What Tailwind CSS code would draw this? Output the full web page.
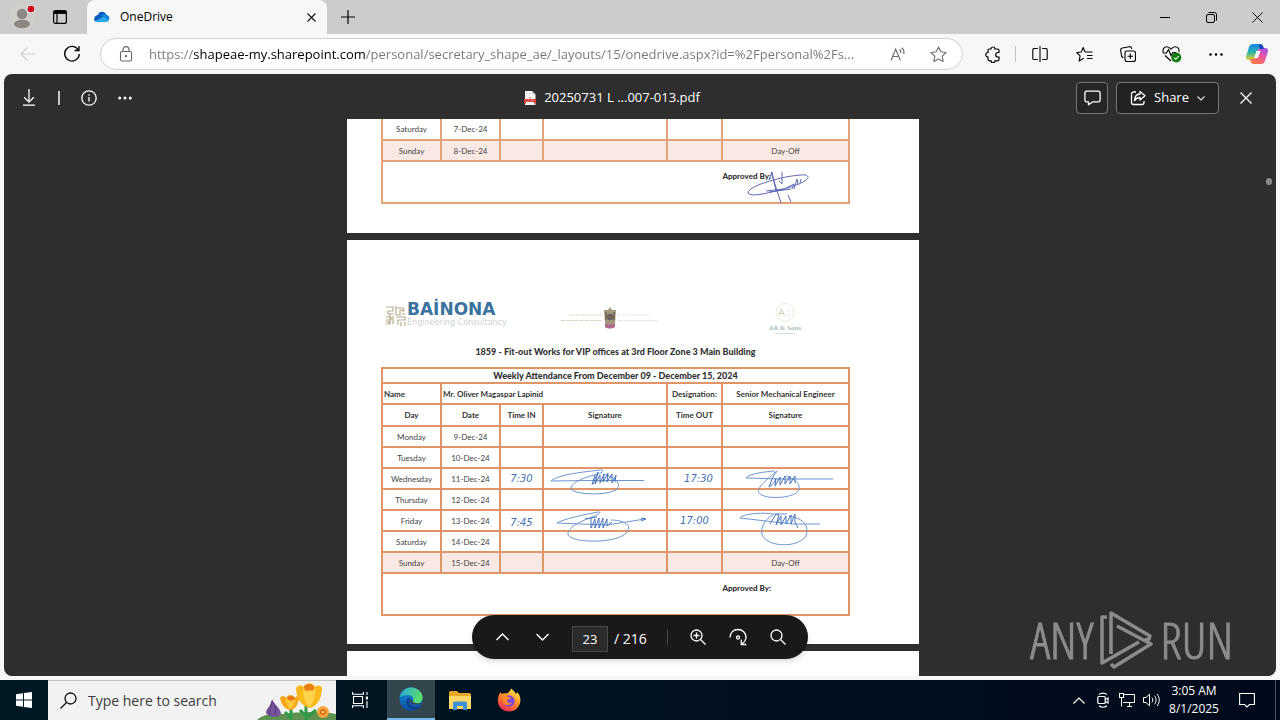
<!DOCTYPE html>
<html lang="en">
<head>
<meta charset="utf-8">
<meta name="viewport" content="width=device-width, initial-scale=1">
<title>OneDrive</title>
<script src="https://cdn.jsdelivr.net/npm/@tailwindcss/browser@4"></script>
</head>
<body class="flex h-screen flex-col overflow-hidden bg-[#f7f7f7] font-['Open_Sans','Noto_Sans',sans-serif] text-black">

<!-- Tab strip -->
<header class="flex h-[34px] shrink-0 bg-[#cccccc]">
  <div class="flex w-[87px] items-center rounded-br-lg">
    <button aria-label="Profile" class="flex h-full w-11 items-center justify-center">
      <svg class="h-7 w-7" viewBox="0 0 28 28"><circle cx="14" cy="14" r="13" fill="#d0cecb"/><circle cx="14" cy="11" r="5.2" fill="#8d8782"/><ellipse cx="14" cy="21" rx="8" ry="4.2" fill="#8d8782"/><circle cx="23" cy="6" r="4.6" fill="#ddd"/><circle cx="23" cy="6" r="3.3" fill="#d0021b"/></svg>
    </button>
    <button aria-label="Tab actions" class="flex h-full w-8 items-center justify-center">
      <svg class="h-4 w-4" viewBox="0 0 16 16" fill="none" stroke="#000" stroke-width="1.2"><rect x="1.6" y="1.6" width="12.8" height="12.8" rx="2"/><path d="M1.6 3.4h12.8" stroke-width="3"/><path d="M5 4v10"/></svg>
    </button>
  </div>
  <div class="flex w-60 items-center rounded-t-lg bg-[#f7f7f7] pr-2 pl-[7px]">
    <svg class="h-4 w-4" viewBox="0 0 16 16"><path d="M4.2 4.8A4.6 4.6 0 0 1 12.4 6L8 9 1 12.5A3.4 3.4 0 0 1 .2 9.800C.4 7.500 2.200 6 4.200 6z" fill="#0a5ec0"/><path d="M7 6.200 14.500 11.500A3.400 3.400 0 0 0 12.400 5.800 4.500 4.500 0 0 0 7 6.200z" fill="#1481dd"/><path d="M1.200 12.400 7.800 8.700c1-.6 2-.6 3 0l4 2.700A2.800 2.800 0 0 1 12.600 13H3.500a3.500 3.500 0 0 1-2.300-.6z" fill="#28a8ea"/></svg>
    <span class="ml-2.5 flex-1 text-xs">OneDrive</span>
    <button aria-label="Close tab" class="flex h-4 w-4 items-center justify-center">
      <svg class="h-[9px] w-[9px]" viewBox="0 0 9 9" stroke="#111" stroke-width="1.1"><path d="M.5.5l8 8M8.500.5l-8 8"/></svg>
    </button>
  </div>
  <button aria-label="New tab" class="flex w-[42px] items-center justify-center">
    <svg class="h-[14px] w-[14px]" viewBox="0 0 14 14" stroke="#000" stroke-width="1.2"><path d="M7 0v14M0 7h14"/></svg>
  </button>
  <div class="ml-auto flex">
    <button aria-label="Minimize" class="flex w-[46px] items-center justify-center"><svg class="h-[10px] w-[10px]" viewBox="0 0 10 10" stroke="#000"><path d="M0 5.500h10"/></svg></button>
    <button aria-label="Restore" class="flex w-[46px] items-center justify-center"><svg class="h-[11px] w-[11px]" viewBox="0 0 11 11" fill="none" stroke="#000"><rect x=".5" y="2.500" width="8" height="8" rx="1.500"/><path d="M2.500.5h6a2 2 0 0 1 2 2v6"/></svg></button>
    <button aria-label="Close" class="flex w-[46px] items-center justify-center"><svg class="h-[11px] w-[11px]" viewBox="0 0 11 11" stroke="#000"><path d="M.5.5l10 10M10.500.5l-10 10"/></svg></button>
  </div>
</header>

<!-- Address bar and browser tools -->
<nav class="flex h-10 shrink-0 items-center pr-1">
  <button aria-label="Back" class="flex h-10 w-14 items-center justify-center"><svg class="h-4 w-4" viewBox="0 0 16 16" fill="none" stroke="#cfcfcf" stroke-width="1.200"><path d="M15.500 8H1M7.500 1.500 1 8l6.500 6.500"/></svg></button>
  <button aria-label="Refresh" class="flex h-10 w-8 items-center justify-center"><svg class="h-[18px] w-[18px]" viewBox="0 0 18 18" fill="none" stroke="#000" stroke-width="1.300"><path d="M15.300 5A7.300 7.300 0 1 0 16.300 9M16 1v4.500h-4.500"/></svg></button>
  <div class="ml-3 flex h-8 min-w-0 flex-1 items-center rounded-full border border-[#d2d2d2] bg-white pr-1">
    <svg class="mr-[15px] ml-[17px] h-4 w-4 shrink-0" viewBox="0 0 16 16" fill="none" stroke="#666" stroke-width="1.100"><rect x="2.500" y="5.500" width="11" height="9.500" rx="1.500"/><path d="M5 5.500V3.600a3 3 0 0 1 6 0v1.900"/><circle cx="8" cy="10.200" r=".6" fill="#555"/></svg>
    <input aria-label="Address" type="text" value="https://shapeae-my.sharepoint.com/personal/secretary_shape_ae/_layouts/15/onedrive.aspx?id=%2Fpersonal%2Fs..." class="min-w-0 flex-1 bg-[linear-gradient(90deg,#767676_44px,#000_44px,#000_216px,#767676_216px)] bg-clip-text text-[13px] leading-5 text-transparent outline-none">
    <button aria-label="Read aloud" class="flex h-8 w-10 shrink-0 items-center justify-center"><svg class="h-4 w-4" viewBox="0 0 16 16" fill="none" stroke="#707070" stroke-width="1.200"><path d="M1 14.500 5.700 3l4.700 11.500M2.600 10.500h6.200M9.500 3.500c1 .9 1.500 2.200 1.300 3.600M11.800 1.800c1.700 1.600 2.500 3.700 2.100 6.300"/></svg></button>
    <button aria-label="Add to favorites" class="flex h-8 w-10 shrink-0 items-center justify-center"><svg class="h-[17px] w-[17px]" viewBox="0 0 17 17" fill="none" stroke="#707070" stroke-width="1.100" stroke-linejoin="round"><path d="M8.500 1l2.300 4.800 5.200.7-3.800 3.600.9 5.300-4.600-2.500-4.600 2.500.9-5.300L1 6.500l5.200-.7z"/></svg></button>
  </div>
  <button aria-label="Extensions" class="ml-2 flex h-10 w-11 items-center justify-center"><svg class="h-[17px] w-[17px]" viewBox="0 0 17 17" fill="none" stroke="#000" stroke-width="1.200"><path d="M4.500 3h1.500a2 2 0 0 1 4 0h2.500A1.500 1.500 0 0 1 14 4.500V6.500h-1a2 2 0 0 0 0 4.500h1v2.300a1.500 1.500 0 0 1-1.500 1.500H10a2 2 0 0 1-4 0H4.500A1.500 1.500 0 0 1 3 13.300V11a2.200 2.200 0 0 1 0-4.500v-2A1.500 1.500 0 0 1 4.500 3z"/></svg></button>
  <div class="h-4 w-px bg-[#c4c4c4]"></div>
  <button aria-label="Split screen" class="ml-0.5 flex h-10 w-11 items-center justify-center"><svg class="h-4 w-4" viewBox="0 0 16 16" fill="none" stroke="#000" stroke-width="1.100"><path d="M8 0v16M5.800 2.500H2A1.200 1.200 0 0 0 .8 3.700v8.600A1.200 1.200 0 0 0 2 13.500h3.800M10.200 2.500H14a1.200 1.200 0 0 1 1.200 1.200v8.600a1.200 1.200 0 0 1-1.200 1.200h-3.800"/></svg></button>
  <button aria-label="Favorites" class="flex h-10 w-11 items-center justify-center"><svg class="h-[17px] w-[17px]" viewBox="0 0 17 17" fill="none" stroke="#000" stroke-width="1.100" stroke-linejoin="round"><path d="M9 6H16.500M11 9.500h5.500M11 12.500h5.500M9 6 7.200 1.500 5.300 6 .7 6.500l3.400 3.300-1 5.200 4.600-2.800"/></svg></button>
  <button aria-label="Collections" class="flex h-10 w-11 items-center justify-center"><svg class="h-4 w-4" viewBox="0 0 16 16" fill="none" stroke="#000" stroke-width="1.100"><rect x="5" y="5" width="10.500" height="10.500" rx="2"/><path d="M10.300 7.500v5.500M7.500 10.300H13M3.500 11.500A2 2 0 0 1 1.600 10L.7 4.300A2 2 0 0 1 2.300 2l7-1.300a2 2 0 0 1 2.300 1.600L11.800 3"/></svg></button>
  <button aria-label="Browser essentials" class="flex h-10 w-11 items-center justify-center"><svg class="h-[18px] w-[20px]" viewBox="0 0 20 18" fill="none" stroke="#000" stroke-width="1.100"><path d="M1.200 7.500C.3 4 2.200 1.800 4.800 1.800c1.800 0 3.100 1 4.200 2.400 1.100-1.400 2.400-2.400 4.200-2.400 2.500 0 4.300 2 3.700 5M1 8h3.500l2-3.500 2.500 6L11 7.500h3M3 10.500 9 16"/><circle cx="14.300" cy="12.500" r="5" fill="#0f7b0f" stroke="none"/><path d="m12 12.600 1.700 1.700 3-3.200" stroke="#fff"/></svg></button>
  <button aria-label="Settings and more" class="flex h-10 w-11 items-center justify-center"><svg class="h-[3px] w-[14px]" viewBox="0 0 14 3"><circle cx="1.500" cy="1.500" r="1.300"/><circle cx="7" cy="1.500" r="1.300"/><circle cx="12.500" cy="1.500" r="1.300"/></svg></button>
  <button aria-label="Copilot" class="flex h-10 w-[38px] items-center justify-center">
    <svg class="h-[22px] w-[24px]" viewBox="0 0 24 22">
      <defs>
        <linearGradient id="cpA" x1="0" y1="0" x2="0" y2="1"><stop offset="0" stop-color="#1b7ff0"/><stop offset=".5" stop-color="#27b5a9"/><stop offset="1" stop-color="#e7d32b"/></linearGradient>
        <linearGradient id="cpB" x1="0.800" y1="0" x2=".2" y2="1"><stop offset="0" stop-color="#a64fe6"/><stop offset=".5" stop-color="#ef5b95"/><stop offset="1" stop-color="#fb7a3c"/></linearGradient>
      </defs>
      <path d="M8 1h7.500c1.500 0 2.200 1 2.700 2.500l.8 2.500h-3.500c-2 0-2.800 1-3.300 2.600l-1.800 5.200C9.700 15.800 9 17 7 17H4c-2.500 0-3.500-1.500-2.800-4L4 4c.7-2 1.800-3 4-3z" fill="url(#cpA)"/>
      <path d="M16 21H8.500c-1.500 0-2.200-1-2.700-2.500L5 16h2.500c2 0 3-1 3.500-2.600l1.600-5.200C13.200 6.200 14.300 5 16.500 5H20c2.500 0 3.500 1.500 2.800 4L20 18c-.7 2-1.800 3-4 3z" fill="url(#cpB)"/>
      <path d="M15 1.200c2 0 2.700 1 3.200 2.500L19 6h-3.500l-2-2.800z" fill="#2045b8"/>
      <path d="M11.500 8h4l-2.600 7H9.200z" fill="#fff"/>
    </svg>
  </button>
</nav>

<!-- Document viewer -->
<main class="relative mx-1 mb-1 flex min-h-0 flex-1 flex-col overflow-hidden rounded-lg bg-[#2e2e2e]">
  <div class="flex h-[45px] shrink-0 items-center pt-0.5 pr-[14px] pl-2 text-white">
    <div class="flex flex-1 items-center">
      <button aria-label="Download" class="flex h-8 w-[34px] items-center justify-center"><svg class="h-[17px] w-3" viewBox="0 0 12 17" fill="none" stroke="#fff" stroke-width="1.300"><path d="M6 0v13M1.200 8.300 6 13.100l4.800-4.800M0 16.200h12"/></svg></button>
      <div class="mr-2 ml-3 h-3.5 w-0.5 bg-[#c8c8c8]"></div>
      <button aria-label="Information" class="ml-[5px] flex h-8 w-8 items-center justify-center"><svg class="h-4 w-4" viewBox="0 0 16 16" fill="none" stroke="#fff" stroke-width="1.300"><circle cx="8" cy="8" r="7.200"/><path d="M8 7v4.500M8 4.200v1.500"/></svg></button>
      <button aria-label="More" class="ml-1 flex h-8 w-8 items-center justify-center"><svg class="h-[4px] w-[14px]" viewBox="0 0 14 4" fill="#fff"><circle cx="1.700" cy="2" r="1.500"/><circle cx="7" cy="2" r="1.500"/><circle cx="12.300" cy="2" r="1.500"/></svg></button>
    </div>
    <h1 class="flex items-center text-[13px] font-medium text-white">
      <svg class="mr-2 h-[14px] w-3" viewBox="0 0 12 14"><path d="M1 0h7l3.500 3.500V14H1z" fill="#f4f4f4"/><path d="M8 0v3.500h3.500z" fill="#c9c9c9"/><path d="M0 8h12v4.500h-2v-1.500H2v1.500H0z" fill="#d9413a"/><path d="M3 10.500c2-1 3-2.500 3-4.500 0 2 1.500 3.500 3.500 3.500" stroke="#e88" fill="none"/></svg>
      20250731 L ...007-013.pdf
    </h1>
    <div class="flex flex-1 items-center justify-end pl-[50px]">
      <button aria-label="Comment" class="flex h-8 w-8 items-center justify-center rounded border border-[#757575] bg-[#262626]"><svg class="h-4 w-[17px]" viewBox="0 0 17 16" fill="none" stroke="#fff" stroke-width="1.300" stroke-linejoin="round"><path d="M2.500 1.200h12a1.600 1.600 0 0 1 1.600 1.600v7.400a1.600 1.600 0 0 1-1.600 1.600H9L4.500 14.800v-3h-2A1.600 1.600 0 0 1 .9 10.200V2.800a1.600 1.600 0 0 1 1.600-1.600z"/></svg></button>
      <button class="ml-2 flex h-8 w-[103px] items-center justify-center rounded border border-[#757575] bg-[#222] text-[13px] font-medium text-white">
        <svg class="mr-2 h-4 w-4" viewBox="0 0 16 16" fill="none" stroke="#fff" stroke-width="1.300" stroke-linejoin="round"><path d="M6 2H3.500A2 2 0 0 0 1.500 4v8.500a2 2 0 0 0 2 2h8.500a2 2 0 0 0 2-2V11M10 1.500 15 5.700 10 10V7.500C7.500 7.500 6 8.500 4.500 10.500 4.700 7 6.500 4.200 10 4z"/></svg>
        Share
        <svg class="ml-2 h-2 w-2" viewBox="0 0 8 8" fill="none" stroke="#ddd" stroke-width="1.200"><path d="M.5 2.500 4 6l3.500-3.500"/></svg>
      </button>
      <button aria-label="Close viewer" class="ml-[11px] flex h-8 w-8 items-center justify-center"><svg class="h-3 w-3" viewBox="0 0 12 12" stroke="#fff" stroke-width="1.300"><path d="M.5.5l11 11M11.500.5l-11 11"/></svg></button>
    </div>
  </div>

  <div class="flex min-h-0 flex-1 flex-col items-center gap-[7px] overflow-hidden pr-[14px] font-[Lato,'Open_Sans',sans-serif] text-[#444]">

    <!-- Page 22, lower part -->
    <section class="relative h-[114px] w-[572px] shrink-0 bg-white pl-[34px]">
      <table class="w-[469px] table-fixed border-collapse text-center text-[8px] leading-3">
        <colgroup><col class="w-[59px]"><col class="w-[59px]"><col class="w-[43px]"><col class="w-[124px]"><col class="w-[55px]"><col></colgroup>
        <tbody>
          <tr class="h-[21px] *:border-2 *:border-t-0 *:border-[#e2a376]"><td>Saturday</td><td>7-Dec-24</td><td></td><td></td><td></td><td></td></tr>
          <tr class="h-[21px] bg-[#f8e9e4] *:border-2 *:border-[#e2a376]"><td>Sunday</td><td>8-Dec-24</td><td></td><td></td><td></td><td>Day-Off</td></tr>
          <tr class="h-[42px] align-top"><td colspan="6" class="border-2 border-[#e2a376] pt-2 pr-[77px] text-right font-black text-[#333]">Approved By:</td></tr>
        </tbody>
      </table>
      <svg class="absolute top-[48px] left-[396px] h-[40px] w-[72px]" viewBox="0 0 72 40" fill="none" stroke="#5f69b4" stroke-width="1"><path d="M5 26c0-8 42-19 58-18 8 4-10 11-26 15S8 30 5 26zM28 5l10 31M26 13l3-8 4 19M39 5v12l-3-3M23 24l18-2 10-5-2 5M51 22l3-10 1 6M58 12l-1 4M45 28l3 7M26 25l22-3"/></svg>
    </section>

    <!-- Page 23 -->
    <section class="relative h-[404px] w-[572px] shrink-0 bg-white pl-[34px]">
      <div class="flex h-[104px] w-[469px] items-end justify-between pr-[50px] pl-[5px] pb-2">
        <div class="flex items-end pb-2">
          <svg class="mb-0.5 h-[20px] w-5" viewBox="0 0 20 20" fill="none" stroke="#b8ae90" stroke-width="1.200"><path d="M0 1h7v4H2v3h6M10 0v9h4V4h5M17 1v5M0 11h5v3H0M7 10v8M10 11h9v3h-7v5M0 19v-3h3v3M15 16v4M19 16v4M16 8h3M10 2h6M4 18V8" /></svg>
          <div class="ml-px flex flex-col">
            <span class="font-['DejaVu_Sans'] text-[17px] leading-[14px] font-bold text-[#3a739e]">BAİNONA</span>
            <span class="mt-0.5 font-['DejaVu_Sans'] text-[8px] leading-[10px] text-[#cfd2d5]">Engineering Consultancy</span>
          </div>
        </div>
        <div class="mr-14 flex items-center pb-1.5">
          <svg class="h-3 w-[42px]" viewBox="0 0 42 12" stroke="#d3c9b2" stroke-width="1.200" fill="none" opacity=".8"><path d="M9 3h32" stroke-dasharray="3 .5 2 .5"/><path d="M0 8.500h41" stroke-dasharray="4 .5 1 .5"/></svg>
          <svg class="h-6 w-[14px]" viewBox="0 0 14 24"><path d="M1 4h4l2-3 2 3h4l-1 13-2 2H4l-2-2z" fill="#a3977d"/><path d="M3 6v8M11 6v8" stroke="#71664d" stroke-width="1.500"/><circle cx="7" cy="11" r="3.200" fill="#5e665f"/><path d="M5.500 11h3" stroke="#c44"/><path d="M2 17c3 2 7 2 10 0v4c-3 2-7 2-10 0z" fill="#b2698c"/></svg>
          <svg class="h-3 w-[42px]" viewBox="0 0 42 12" stroke="#dadad6" stroke-width="1" fill="none" opacity=".8"><path d="M1 3h31" stroke-dasharray="3 1 2 1"/><path d="M1 8.500h40" stroke-dasharray="4 1 2 1"/></svg>
        </div>
        <div class="flex w-[30px] flex-col items-center pb-0.5">
          <svg class="h-5 w-5" viewBox="0 0 20 20" fill="none" stroke="#eee9da"><circle cx="10" cy="9.500" r="9"/><path d="M3.500 12.500 6.500 6l3 6.500M4.500 10.500h4" stroke="#cfc9b2"/><path d="M15.500 7c-3-2-4 1-2 2.500s1 4-2 2.500"/></svg>
          <span class="mt-0.5 font-['Liberation_Serif'] text-[7px] leading-[7px] font-bold whitespace-nowrap text-[#a9bcbc]">Ali &amp; Sons</span>
          <span class="mt-px h-px w-5 bg-[#d5dfdf]"></span>
        </div>
      </div>
      <h2 class="w-[469px] text-center text-[9px] leading-[15px] font-black text-[#333]">1859 - Fit-out Works for VIP offices at 3rd Floor Zone 3 Main Building</h2>
      <table class="mt-2 w-[469px] table-fixed border-collapse text-center text-[8px] leading-3">
        <colgroup><col class="w-[59px]"><col class="w-[59px]"><col class="w-[43px]"><col class="w-[124px]"><col class="w-[55px]"><col></colgroup>
        <thead class="font-black text-[#333]">
          <tr class="h-[15px]"><th colspan="6" class="border-2 border-[#df9568] text-[9px] font-black">Weekly Attendance From December 09 - December 15, 2024</th></tr>
          <tr class="h-[21px] *:border-2 *:border-[#df9568]"><th class="pl-px text-left">Name</th><th colspan="3" class="pl-px text-left">Mr. Oliver Magaspar Lapinid</th><th>Designation:</th><th>Senior Mechanical Engineer</th></tr>
          <tr class="h-[22px] *:border-2 *:border-[#df9568]"><th>Day</th><th>Date</th><th>Time IN</th><th>Signature</th><th>Time OUT</th><th>Signature</th></tr>
        </thead>
        <tbody>
          <tr class="h-[21px] *:border-2 *:border-[#df9568]"><td>Monday</td><td>9-Dec-24</td><td></td><td></td><td></td><td></td></tr>
          <tr class="h-[21px] *:border-2 *:border-[#df9568]"><td>Tuesday</td><td>10-Dec-24</td><td></td><td></td><td></td><td></td></tr>
          <tr class="h-[21px] *:border-2 *:border-[#df9568]"><td>Wednesday</td><td>11-Dec-24</td><td class="font-['DejaVu_Sans'] text-[10px] text-[#4570b4] italic">7:30</td><td></td><td class="pl-2 font-['DejaVu_Sans'] text-[10px] text-[#4570b4] italic">17:30</td><td></td></tr>
          <tr class="h-[21px] *:border-2 *:border-[#df9568]"><td>Thursday</td><td>12-Dec-24</td><td></td><td></td><td></td><td></td></tr>
          <tr class="h-[21px] *:border-2 *:border-[#df9568]"><td>Friday</td><td>13-Dec-24</td><td class="pt-1 font-['DejaVu_Sans'] text-[10px] text-[#4570b4] italic">7:45</td><td></td><td class="font-['DejaVu_Sans'] text-[10px] text-[#4570b4] italic">17:00</td><td></td></tr>
          <tr class="h-[21px] *:border-2 *:border-[#df9568]"><td>Saturday</td><td>14-Dec-24</td><td></td><td></td><td></td><td></td></tr>
          <tr class="h-[21px] bg-[#f8e9e4] *:border-2 *:border-[#df9568]"><td>Sunday</td><td>15-Dec-24</td><td></td><td></td><td></td><td>Day-Off</td></tr>
          <tr class="h-[42px] align-top"><td colspan="6" class="border-2 border-[#df9568] pt-2 pr-[77px] text-right font-black text-[#333]">Approved By:</td></tr>
        </tbody>
      </table>
      <!-- Handwritten signatures over the Wednesday and Friday rows -->
      <svg class="absolute top-[225px] left-[200px] h-[85px] w-[290px]" viewBox="0 0 290 85" fill="none" stroke="#6d97cf" stroke-width="1">
        <path d="M97 15.500H40L4 16C12 9 38 7 53 5c6 0 3 3-6 5C33 14 24 18 24 24c4 6 38 7 46 0 5-7-4-12-14-15"/>
        <path d="M46 19 51 7l-3 12 5-9v8l4-9-1 8 5-9-1 9 5-8v9l4-8-1 7M45 20l3-10" stroke="#4a74bd"/>
        <path d="M98 54 60 60 10 58c6-4 30-9 41-11 5 0-1 3-8 6C29 58 20 64 21 70c6 9 50 8 58-2 8-8-3-13-15-13"/>
        <path d="M38 54l12-2M44 53v10l4-9v9l4-10v10l4-10v10l4-9v7l5-4M94 53l5 1-5 2" stroke="#4a74bd"/>
        <path d="M286 14H233L199 13C203 8 219 7 226 6c4 0 1 2-2 5-8 7-16 14-11 18 8 6 35 4 39-4 1-8-5-11-13-14"/>
        <path d="M222 22c2-5 4-12 8-16M222 22c5-3 6-6 7-9l-1 8 5-9v8l5-9v8l5-8v8l5-8v7" stroke="#4a74bd"/>
        <path d="M273 59H245L193 53c3-4 20-6 33-4h14M226 50c-7 3-13 12-11 19 4 14 37 14 44 2 4-12-5-18-17-20"/>
        <path d="M223 59l6-10 3 1-3 10 5-9v9l5-9v8l5-9v9l4-10v8l3 6" stroke="#4a74bd"/>
      </svg>
    </section>

    <!-- Page 24, upper edge -->
    <section class="min-h-0 w-[572px] flex-1 bg-white"></section>
  </div>

  <div class="absolute top-[104px] right-1 h-[7px] w-[6px] rounded-full bg-[#8a8a8a]"></div>

  <!-- Page controls -->
  <div class="absolute bottom-[17px] left-1/2 flex h-11 -translate-x-1/2 items-center rounded-full bg-[#1b1917] px-2.5 text-white shadow-md">
    <button aria-label="Previous page" class="flex h-10 w-10 items-center justify-center"><svg class="h-2 w-[13px]" viewBox="0 0 13 8" fill="none" stroke="#fff" stroke-width="1.400"><path d="M.5 7l6-6 6 6"/></svg></button>
    <button aria-label="Next page" class="flex h-10 w-10 items-center justify-center"><svg class="h-2 w-[13px]" viewBox="0 0 13 8" fill="none" stroke="#fff" stroke-width="1.400"><path d="M.5 1l6 6 6-6"/></svg></button>
    <div class="mt-1 ml-2.5 flex w-[95px] items-center text-sm">
      <input aria-label="Page" type="text" value="23" class="h-[26px] w-9 border border-[#4a4a4a] bg-[#2b2b2b] text-center text-[13px] text-white">
      <span class="ml-1.5 whitespace-nowrap">/ 216</span>
    </div>
    <div class="mr-2.5 h-4 w-px bg-[#484644]"></div>
    <button aria-label="Zoom in" class="flex h-10 w-10 items-center justify-center"><svg class="h-4 w-4" viewBox="0 0 16 16" fill="none" stroke="#fff" stroke-width="1.300"><circle cx="6.500" cy="6.500" r="5.500"/><path d="M10.500 10.500l5 5M6.500 3.500v6M3.500 6.500h6"/></svg></button>
    <button aria-label="Rotate" class="flex h-10 w-10 items-center justify-center"><svg class="h-[18px] w-[18px]" viewBox="0 0 18 18" fill="none" stroke="#fff" stroke-width="1.300"><path d="M1 9.500C1 4.500 4.500 1.500 9 1.500s8 3.300 8 7.500c0 3-1.800 5.500-4.500 7M12.300 11.500v5h5"/><circle cx="9" cy="9.500" r="1.500"/></svg></button>
    <button aria-label="Find" class="flex h-10 w-10 items-center justify-center"><svg class="h-4 w-4" viewBox="0 0 16 16" fill="none" stroke="#fff" stroke-width="1.300"><circle cx="6.500" cy="6.500" r="5.500"/><path d="M10.500 10.500l5 5"/></svg></button>
  </div>

  <!-- Watermark -->
  <div class="absolute right-[43px] bottom-1 flex h-16 items-center gap-1.5 font-['Open_Sans_Condensed_Light','Open_Sans_Condensed','Roboto_Condensed','Liberation_Sans',sans-serif] text-[50px] leading-none font-light text-[#8b8b8b] [-webkit-text-stroke:1px_#8b8b8b]">
    <span>ANY</span>
    <svg class="h-[62px] w-[55px]" viewBox="0 0 55 62" fill="none" stroke="#8b8b8b" stroke-width="3.500" stroke-linejoin="round"><path d="M8 8H3v46l37-21M12 45V4l39 23-1 3-4 1M18 17l34 18-37 23-3-3"/></svg>
    <span>RUN</span>
  </div>
</main>

<!-- Windows taskbar -->
<footer class="flex h-10 shrink-0 items-stretch bg-linear-to-r from-[#001923] to-[#010a1b] text-white">
  <button aria-label="Start" class="flex w-12 items-center justify-center"><svg class="h-4 w-4" viewBox="0 0 16 16" fill="#fff"><path d="M0 2.200 7 1.200V7.500H0zM8 1.100 16 0V7.500H8zM0 8.500H7v6.300L0 13.800zM8 8.500h8V16L8 14.900z"/></svg></button>
  <label class="flex w-72 items-center border-t border-[#c4c4c4] bg-[#f2f2f2] pl-3">
    <svg class="h-[17px] w-[17px] shrink-0" viewBox="0 0 17 17" fill="none" stroke="#111" stroke-width="1.300"><circle cx="10.500" cy="6.500" r="5.500"/><path d="M6.500 10.500.5 16.500"/></svg>
    <input aria-label="Search" type="text" placeholder="Type here to search" class="ml-[11px] min-w-0 flex-1 bg-transparent text-[14px] leading-5 text-[#333] outline-none placeholder:text-[#3c3c3c]">
    <svg class="h-[39px] w-[80px] shrink-0" viewBox="0 0 80 39">
      <path d="M1 39c6-6 16-7 26-6 14-2 36-3 53 0v6z" fill="#5f9150"/>
      <path d="M10 32c0-5 5-6 6-14 2 6 9 9 9 15-3 4-12 4-15-1z" fill="#77559b"/><path d="M16 20c-1 5-3 8-2 14M17 21c3 5 3 8 2 13" stroke="#513574" fill="none"/>
      <path d="M35 39V27M50 39V25M35 37l-6-6M50 37l10-8M50 35l-6-6" stroke="#2f9b49" stroke-width="3"/>
      <path d="M24 17c2-3 5-2 6 0 2-4 7-4 9 0 1-3 5-2 4 1-1 5-3 10-8 11-6 0-10-6-11-12z" fill="#f6a819"/><path d="M30 18c0 5 2 8 4 10 3-2 5-5 5-10-2-3-7-3-9 0z" fill="#ffc93b"/><path d="M31 17c2-3 6-2 8 0-1 3-6 4-8 0z" fill="#e57714"/>
      <path d="M40 7c2-4 6-3 8-1 2-5 9-5 11 0 3-3 8-1 7 3-1 8-4 16-12 18-8-1-14-10-14-20z" fill="#f9b91c"/><path d="M47 8c0 8 3 14 6 18 4-4 7-10 6-18-2-4-10-4-12 0z" fill="#ffd44a"/><path d="M48 6c1-4 8-4 10 0 1 3-2 5-4 3-3 2-6 1-6-3z" fill="#e87e16"/>
      <circle cx="67" cy="31" r="6" fill="#f6a63c"/><circle cx="67" cy="31" r="3" fill="#d96b21"/><circle cx="67" cy="31" r="1.300" fill="#ffd35a"/>
    </svg>
  </label>
  <button aria-label="Task view" class="mr-[3px] flex w-12 items-center justify-center"><svg class="h-4 w-4" viewBox="0 0 16 16" fill="none" stroke="#fff" stroke-width="1.100"><path d="M.6 0v2.200h10.800V0M1.500 4.500h9v7h-9zM.6 16v-2.200h10.800V16M15 0v3M15 9v7"/><path d="M13.900 4.500h2.100v3h-2.100z" fill="#fff" stroke="none"/></svg></button>
  <button aria-label="Microsoft Edge" class="flex w-12 items-center justify-center border-b-2 border-[#76b9ed] bg-[#33464e]">
    <svg class="h-6 w-6" viewBox="0 0 24 24">
      <defs><linearGradient id="eg1" x1="0" y1="0" x2="1" y2=".3"><stop offset="0" stop-color="#2aa8dd"/><stop offset="1" stop-color="#5bdc6c"/></linearGradient><linearGradient id="eg2" x1="0" y1="0" x2="0" y2="1"><stop offset="0" stop-color="#1593d8"/><stop offset="1" stop-color="#0b4ea8"/></linearGradient></defs>
      <circle cx="12" cy="12" r="11.500" fill="url(#eg2)"/>
      <path d="M.6 10.500C2 4 7 .4 12.200.5 19 .6 23.600 5.500 23.600 10.500c0 4-3 6.500-6.700 6.500-3 0-4.500-1.200-3.300-2.500 2.300-3-.3-6.500-4.600-6.500-4 0-6.800 1-8.400 2.500z" fill="url(#eg1)"/>
      <path d="M8.500 11.500c-3 5 1 11.300 7 11.300 3 0 5.700-2 6.700-4.300-5 2.500-11.500.8-12.200-5 0-1.500 1-2.500 1.500-3z" fill="#123f8e"/>
      <path d="M10.500 11.500c0 5.500 5 8 12 4.500-5 .8-9.500-.2-9-2.500z" fill="#33464e"/>
    </svg>
  </button>
  <button aria-label="File Explorer" class="ml-px flex w-12 items-center justify-center"><svg class="h-[19px] w-[22px]" viewBox="0 0 22 19"><path d="M0 1.500A1.500 1.500 0 0 1 1.500 0H8l2 2h10.500A1.500 1.500 0 0 1 22 3.500V18H0z" fill="#e9a728"/><path d="M0 5h22v13H0z" fill="#ffd766"/><path d="M4 19v-7a1.500 1.500 0 0 1 1.500-1.500h11A1.500 1.500 0 0 1 18 12v7h-4v-4H8v4z" fill="#3c8fd1"/></svg></button>
  <button aria-label="Firefox" class="ml-px flex w-12 items-center justify-center">
    <svg class="h-6 w-6" viewBox="0 0 24 24">
      <defs><linearGradient id="ff1" x1=".8" y1="0" x2=".2" y2="1"><stop offset="0" stop-color="#fff04a"/><stop offset=".45" stop-color="#ff9026"/><stop offset="1" stop-color="#ec2058"/></linearGradient></defs>
      <path d="M14 .5c3 2 4 4 5 5.500.8-.5 1-1.200 1-2C23 7 23.700 10 23.300 13.500 22.500 19.500 18 23.500 12 23.500S1 19 .8 13C.7 9 2 6 4 3.800c0 1 .2 1.800.7 2.400C6 5 7.500 5 9 5.500c2-.3 4-2 5-5z" fill="url(#ff1)"/>
      <circle cx="12" cy="13" r="5.700" fill="#7b4adb"/><path d="M5 9c2-2 4-1.500 6 0 1.500 0 2.500.5 3 1.200-1.500 1.200-3.500.8-4 2.300-.5 2 2.500 3 5 2-1.500 2.500-5 3.500-7.500 1.500C5.500 14.500 4.500 12 5 9z" fill="#ff8a25"/>
    </svg>
  </button>
  <div class="ml-auto flex items-center">
    <button aria-label="Show hidden icons" class="flex h-10 w-6 items-center justify-center"><svg class="h-[7px] w-3" viewBox="0 0 12 7" fill="none" stroke="#fff" stroke-width="1.200"><path d="M.5 6.500 6 1l5.500 5.500"/></svg></button>
    <button aria-label="Meet now" class="flex h-10 w-6 items-center justify-center"><svg class="h-4 w-3" viewBox="0 0 12 16" fill="none" stroke="#fff" stroke-width="1.200"><rect x=".8" y="4.500" width="7.400" height="7" rx="1"/><path d="M8.200 7.500 11 6v5L8.200 9.500M2 2.500c2.500-1.800 5.500-1.800 8 0M2 13.800c2.500 1.800 5.500 1.800 8 0"/></svg></button>
    <button aria-label="Network" class="flex h-10 w-6 items-center justify-center"><svg class="h-[14px] w-4" viewBox="0 0 16 14" fill="none" stroke="#fff"><path d="M5 1.500h10.500v8H4M2.500 4v9.500M8 13.500h5M10.500 9.500v4"/><rect x=".5" y=".5" width="4" height="4"/></svg></button>
    <button aria-label="Volume" class="flex h-10 w-6 items-center justify-center"><svg class="h-[14px] w-[17px]" viewBox="0 0 17 14" fill="none" stroke="#fff"><path d="M.5 4.500H3L6.500 1.200v11.600L3 9.500H.5zM9 4.500c1 1.500 1 3.500 0 5M11.500 2.700c2 2.500 2 6.100 0 8.600M14 1c3 3.500 3 8.500 0 12"/></svg></button>
    <button class="flex h-10 w-[62px] flex-col items-center justify-center text-xs leading-[18px] whitespace-nowrap text-white"><span>3:05 AM</span><span>8/1/2025</span></button>
    <button aria-label="Notifications" class="flex h-10 w-11 items-center justify-center"><svg class="h-4 w-4" viewBox="0 0 16 16" fill="none" stroke="#fff" stroke-width="1.100"><path d="M.6 1.500h14.800v11H10.500L8 15l-2.500-2.500H.6z"/></svg></button>
    <div class="mr-1 ml-1.5 h-10 w-px bg-[#46505c]"></div>
  </div>
</footer>
</body>
</html>
